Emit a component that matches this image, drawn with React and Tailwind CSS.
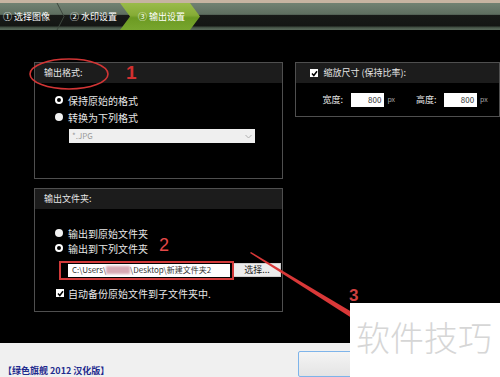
import React from 'react';

const FONT = { fontFamily: '"Noto Sans CJK SC", "Liberation Sans", sans-serif' };

function Radio({ checked }) {
  // ring = selected, solid = not selected (as drawn in the skin)
  return checked ? (
    <span className="w-[8px] h-[8px] rounded-full bg-white flex items-center justify-center">
      <span className="w-[4px] h-[4px] rounded-full bg-black" />
    </span>
  ) : (
    <span className="w-[8px] h-[8px] rounded-full bg-[#f2f2f2]" />
  );
}

function Check() {
  return (
    <span className="w-[8px] h-[8px] bg-white flex items-center justify-center">
      <svg width="7" height="7" viewBox="0 0 7 7">
        <path d="M1 3.5 L2.8 5.5 L6 1.2" stroke="#000" strokeWidth="1.5" fill="none" />
      </svg>
    </span>
  );
}

function Panel({ title, className, children }) {
  return (
    <div className={`border border-[#4f4f4f] bg-black flex flex-col ${className}`}>
      <div className="h-[20px] bg-[#1c1c1c] flex items-center pl-[9px] text-[9px] text-[#e6e6e6]">
        {title}
      </div>
      {children}
    </div>
  );
}

export default function App() {
  return (
    <div className="relative w-[500px] h-[377px] overflow-hidden bg-black" style={FONT}>
      {/* Step tabs */}
      <div className="h-[3px] bg-[#c6b4a1]" />
      <div className="relative h-[27px] flex bg-[linear-gradient(to_bottom,#718272_0%,#5e6e60_42%,#181a18_46%,#141614_84%,#4b5b4d_92%,#5a6a5c_100%)]">
        <div className="w-[60px] flex items-center pl-[3px] text-[9px] text-white">① 选择图像</div>
        <svg className="absolute left-[56px] top-0" width="10" height="27" viewBox="0 0 10 27">
          <path d="M1 0 L8 13.5 L1 27" stroke="#3d473e" strokeWidth="1" fill="none" />
        </svg>
        <div className="w-[60px] flex items-center pl-[10px] text-[9px] text-white">② 水印设置</div>
        <div className="w-[80px] flex items-center pl-[18px] text-[9px] text-white bg-[linear-gradient(to_bottom,#9abb4a_0%,#86ac36_45%,#6c9a22_55%,#78a62e_100%)] [clip-path:polygon(0_0,70px_0,80px_50%,70px_100%,0_100%,10px_50%)]">
          ③ 输出设置
        </div>
      </div>

      {/* Settings area */}
      <div className="h-[313px] bg-black flex pl-[34px] pt-[32px] gap-[12px]">
        <div className="w-[256px] flex flex-col gap-[9px]">
          <Panel title="输出格式:" className="h-[117px]">
            <div className="pl-[20px] pt-[10px] flex flex-col gap-[3px] text-[10px] text-[#e8e8e8]">
              <div className="h-[14px] flex items-center gap-[5px]"><Radio checked /><span>保持原始的格式</span></div>
              <div className="h-[14px] flex items-center gap-[5px]"><Radio /><span>转换为下列格式</span></div>
              <div className="ml-[14px] mt-[2px] w-[186px] h-[14px] bg-[#efefef] flex items-center justify-between px-[3px] text-[8px] text-[#9a9a9a]">
                <span>*.JPG</span>
                <svg width="7" height="5" viewBox="0 0 7 5"><path d="M0.5 1 L3.5 4 L6.5 1" stroke="#b0b0b0" fill="none" /></svg>
              </div>
            </div>
          </Panel>
          <Panel title="输出文件夹:" className="h-[124px]">
            <div className="pl-[20px] pt-[17px] flex flex-col text-[10px] text-[#e8e8e8]">
              <div className="h-[14px] flex items-center gap-[5px]"><Radio /><span>输出到原始文件夹</span></div>
              <div className="h-[14px] mt-[1px] flex items-center gap-[5px]"><Radio checked /><span>输出到下列文件夹</span></div>
              <div className="mt-[8px] ml-[13px] flex items-center gap-[3px]">
                <div className="w-[162px] h-[13px] bg-white flex items-center pl-[4px] text-[8px] text-[#333] whitespace-nowrap">
                  <span>C:\Users\</span>
                  <span className="w-[24px] h-[8px] bg-[#d7a9b3] blur-[1px]" />
                  <span>\Desktop\新建文件夹2</span>
                </div>
                <div className="w-[48px] h-[14px] bg-[#ececec] border border-[#cfcfcf] flex items-center justify-center text-[9px] text-[#222]">
                  选择...
                </div>
              </div>
              <div className="h-[14px] mt-[9px] ml-[1px] flex items-center gap-[4px]"><Check /><span>自动备份原始文件到子文件夹中.</span></div>
            </div>
          </Panel>
        </div>

        <div className="w-[210px] h-[55px] border border-[#4f4f4f] flex flex-col">
          <div className="h-[20px] bg-[#1c1c1c] flex items-center pl-[14px] gap-[5px] text-[9px] text-[#e6e6e6]">
            <Check /><span>缩放尺寸 (保持比率):</span>
          </div>
          <div className="flex-1 flex items-center pl-[26px] text-[9px] text-[#e6e6e6]">
            <span className="w-[29px]">宽度:</span>
            <div className="w-[33px] h-[14px] bg-white text-right pr-[3px] text-[8px] text-[#333] leading-[14px]">800</div>
            <span className="ml-[3px] text-[7px] text-[#aaa]">px</span>
            <span className="ml-[21px] w-[28px]">高度:</span>
            <div className="w-[33px] h-[14px] bg-white text-right pr-[3px] text-[8px] text-[#333] leading-[14px]">800</div>
            <span className="ml-[3px] text-[7px] text-[#aaa]">px</span>
          </div>
        </div>
      </div>

      {/* Bottom strip */}
      <div className="h-[34px] bg-[#f0f0f0] grid grid-cols-[298px_1fr] items-end">
        <div className="pl-[3px] pb-[2px] text-[9px] font-bold text-[#1f2b8e] leading-none">【绿色旗舰 2012 汉化版】</div>
        <div className="w-[60px] h-[26px] border border-[#7eb4ea] rounded-[2px] bg-[linear-gradient(to_bottom,#f4f4f4,#e4e4e4)]" />
      </div>

      {/* Annotations */}
      <svg className="absolute left-0 top-0 pointer-events-none" width="500" height="377" viewBox="0 0 500 377">
        <ellipse cx="69" cy="74" rx="39" ry="15" stroke="#d23535" strokeWidth="1.6" fill="none" />
        <rect x="60" y="262" width="173" height="17" stroke="#d23a3a" strokeWidth="2" fill="none" />
        <polygon points="250,253 251,252 362,318 358,322" fill="#d93838" />
      </svg>
      <div className="absolute left-[126px] top-[63px] text-[19px] font-bold text-[#d23030] leading-none" style={{ fontFamily: '"Liberation Sans", sans-serif' }}>1</div>
      <div className="absolute left-[159px] top-[236px] text-[18px] text-[#e44848] leading-none" style={{ fontFamily: '"Liberation Sans", sans-serif' }}>2</div>
      <div className="absolute left-[349px] top-[287px] text-[17px] font-bold text-[#cf4040] leading-none" style={{ fontFamily: '"Liberation Sans", sans-serif' }}>3</div>

      {/* Watermark */}
      <div className="absolute left-[350px] top-[303px] w-[150px] h-[74px] bg-white pl-[6px] pt-[17px] text-[34px] font-light leading-none text-[#d6d6d6] whitespace-nowrap">
        软件技巧
      </div>
    </div>
  );
}
